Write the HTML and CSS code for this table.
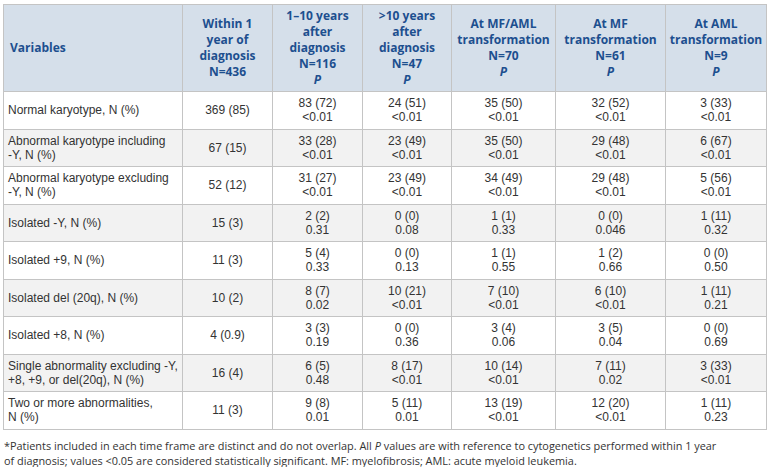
FILE: index.html
```html
<!DOCTYPE html>
<html lang="en">
<head>
<meta charset="utf-8">
<title>Cytogenetics table</title>
<link rel="stylesheet" href="styles.css">
</head>
<body>
<div class="page">
<table class="data">
  <colgroup>
    <col class="c1"><col class="c2"><col class="c3"><col class="c4"><col class="c5"><col class="c6"><col class="c7">
  </colgroup>
  <thead>
    <tr>
      <th class="var">Variables</th>
      <th>Within 1<br>year of<br>diagnosis<br>N=436</th>
      <th>1–10 years<br>after<br>diagnosis<br>N=116<br><i>P</i></th>
      <th>&gt;10 years<br>after<br>diagnosis<br>N=47<br><i>P</i></th>
      <th>At MF/AML<br>transformation<br>N=70<br><i>P</i></th>
      <th>At MF<br>transformation<br>N=61<br><i>P</i></th>
      <th>At AML<br>transformation<br>N=9<br><i>P</i></th>
    </tr>
  </thead>
  <tbody>
    <tr>
      <td class="var">Normal karyotype, N (%)</td>
      <td>369 (85)</td>
      <td>83 (72)<br>&lt;0.01</td>
      <td>24 (51)<br>&lt;0.01</td>
      <td>35 (50)<br>&lt;0.01</td>
      <td>32 (52)<br>&lt;0.01</td>
      <td>3 (33)<br>&lt;0.01</td>
    </tr>
    <tr>
      <td class="var">Abnormal karyotype including<br>-Y, N (%)</td>
      <td>67 (15)</td>
      <td>33 (28)<br>&lt;0.01</td>
      <td>23 (49)<br>&lt;0.01</td>
      <td>35 (50)<br>&lt;0.01</td>
      <td>29 (48)<br>&lt;0.01</td>
      <td>6 (67)<br>&lt;0.01</td>
    </tr>
    <tr>
      <td class="var">Abnormal karyotype excluding<br>-Y, N (%)</td>
      <td>52 (12)</td>
      <td>31 (27)<br>&lt;0.01</td>
      <td>23 (49)<br>&lt;0.01</td>
      <td>34 (49)<br>&lt;0.01</td>
      <td>29 (48)<br>&lt;0.01</td>
      <td>5 (56)<br>&lt;0.01</td>
    </tr>
    <tr>
      <td class="var">Isolated -Y, N (%)</td>
      <td>15 (3)</td>
      <td>2 (2)<br>0.31</td>
      <td>0 (0)<br>0.08</td>
      <td>1 (1)<br>0.33</td>
      <td>0 (0)<br>0.046</td>
      <td>1 (11)<br>0.32</td>
    </tr>
    <tr>
      <td class="var">Isolated +9, N (%)</td>
      <td>11 (3)</td>
      <td>5 (4)<br>0.33</td>
      <td>0 (0)<br>0.13</td>
      <td>1 (1)<br>0.55</td>
      <td>1 (2)<br>0.66</td>
      <td>0 (0)<br>0.50</td>
    </tr>
    <tr>
      <td class="var">Isolated del (20q), N (%)</td>
      <td>10 (2)</td>
      <td>8 (7)<br>0.02</td>
      <td>10 (21)<br>&lt;0.01</td>
      <td>7 (10)<br>&lt;0.01</td>
      <td>6 (10)<br>&lt;0.01</td>
      <td>1 (11)<br>0.21</td>
    </tr>
    <tr>
      <td class="var">Isolated +8, N (%)</td>
      <td>4 (0.9)</td>
      <td>3 (3)<br>0.19</td>
      <td>0 (0)<br>0.36</td>
      <td>3 (4)<br>0.06</td>
      <td>3 (5)<br>0.04</td>
      <td>0 (0)<br>0.69</td>
    </tr>
    <tr>
      <td class="var">Single abnormality excluding -Y,<br>+8, +9, or del(20q), N (%)</td>
      <td>16 (4)</td>
      <td>6 (5)<br>0.48</td>
      <td>8 (17)<br>&lt;0.01</td>
      <td>10 (14)<br>&lt;0.01</td>
      <td>7 (11)<br>0.02</td>
      <td>3 (33)<br>&lt;0.01</td>
    </tr>
    <tr>
      <td class="var">Two or more abnormalities,<br>N (%)</td>
      <td>11 (3)</td>
      <td>9 (8)<br>0.01</td>
      <td>5 (11)<br>0.01</td>
      <td>13 (19)<br>&lt;0.01</td>
      <td>12 (20)<br>&lt;0.01</td>
      <td>1 (11)<br>0.23</td>
    </tr>
  </tbody>
</table>
<p class="note">*Patients included in each time frame are distinct and do not overlap. All <i>P</i> values are with reference to cytogenetics performed within 1 year<br>of diagnosis; values &lt;0.05 are considered statistically significant. MF: myelofibrosis; AML: acute myeloid leukemia.</p>
</div>
</body>
</html>
```
FILE: styles.css
```css
html, body {
  margin: 0;
  padding: 0;
  background: #ffffff;
}

.page {
  padding: 4px 0 0 3px;
}

.data {
  border-collapse: collapse;
  table-layout: fixed;
  width: 763px;
  font-family: "Liberation Sans", Arial, sans-serif;
  font-size: 12px;
  color: #333333;
}

.c1 { width: 179px; }
.c2 { width: 90px; }
.c3 { width: 90px; }
.c4 { width: 89px; }
.c5 { width: 104px; }
.c6 { width: 110px; }
.c7 { width: 101px; }

.data th,
.data td {
  border: 1px solid #c4c4c4;
  text-align: center;
  vertical-align: middle;
  padding: 0 3px;
}

.data th {
  background: #d5dfea;
  color: #1d4f8f;
  font-family: "Open Sans", "DejaVu Sans", sans-serif;
  font-weight: 700;
  font-size: 12px;
  line-height: 16px;
  height: 86px;
}

.data th i {
  font-style: italic;
}

.data td {
  line-height: 14px;
  height: 36.5px;
}

.data tbody tr:nth-child(even) td {
  background: #f2f2f2;
}

.data .var {
  text-align: left;
  padding-left: 4px;
}

.data th.var {
  padding-left: 6px;
}

.note {
  margin: 8px 0 0 1px;
  font-family: "Open Sans", "DejaVu Sans", sans-serif;
  font-size: 10.9px;
  line-height: 15px;
  color: #333333;
  white-space: nowrap;
}
```
